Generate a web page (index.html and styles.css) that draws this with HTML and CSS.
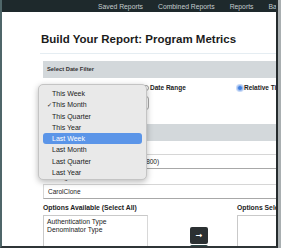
FILE: index.html
```html
<!DOCTYPE html>
<html>
<head>
<meta charset="utf-8">
<link rel="stylesheet" href="styles.css">
</head>
<body>
<div class="screen">
  <nav class="topnav">
    <span>Saved Reports</span>
    <span>Combined Reports</span>
    <span>Reports</span>
    <span>Back</span>
  </nav>
  <main class="content">
    <h1 class="title">Build Your Report: Program Metrics</h1>
    <div class="rule"></div>
    <div class="bar">Select Date Filter</div>
    <div class="radios">
      <label class="radio"><span class="dot"></span>Date Preset</label>
      <label class="radio"><span class="dot"></span>Date Range</label>
      <label class="radio"><span class="dot on"></span>Relative Time</label>
    </div>
    <div class="select">This Month<span class="chev"></span></div>
    <div class="bar bar2">Select Program</div>
    <div class="label">Program</div>
    <div class="input">CarolClone - Test Program A (ID 1800)</div>
    <div class="label">Call Program Name</div>
    <div class="input">CarolClone</div>
    <div class="options">
      <div class="olabel">Options Available (Select All)</div>
      <div></div>
      <div class="olabel">Options Selected</div>
      <div class="list">
        <div>Authentication Type</div>
        <div>Denominator Type</div>
      </div>
      <div class="mid">
        <button class="btn">&#8594;</button>
        <button class="btn btn2"></button>
      </div>
      <div class="list"></div>
    </div>
  </main>
  <div class="menu">
    <div class="item">This Week</div>
    <div class="item checked">This Month</div>
    <div class="item">This Quarter</div>
    <div class="item">This Year</div>
    <div class="item active">Last Week</div>
    <div class="item">Last Month</div>
    <div class="item">Last Quarter</div>
    <div class="item">Last Year</div>
  </div>
</div>
</body>
</html>
```

FILE: styles.css
```css
html, body {
  margin: 0;
  padding: 0;
}
body {
  background: #a9afb1;
  font-family: "Liberation Sans", Arial, sans-serif;
  color: #222;
}
.screen {
  position: relative;
  width: 278px;
  height: 248px;
  box-sizing: border-box;
  border-left: 2px solid #4f6669;
  border-right: 2px solid #252b2d;
  border-bottom: 2px solid #2f3537;
  background: #fff;
  overflow: hidden;
}
.topnav {
  height: 12px;
  background: #1e292c;
  display: flex;
  align-items: center;
  gap: 15px;
  padding-left: 96px;
  font-size: 6.8px;
  color: #c3cbcd;
  white-space: nowrap;
  overflow: hidden;
}
.content {
  padding-left: 41px;
}
.title {
  margin: 21px 0 0 -2px;
  font-size: 11.5px;
  line-height: 13px;
  font-weight: 700;
  color: #1c1c1c;
  white-space: nowrap;
}
.rule {
  margin: 7px 0 0 -3px;
  height: 1px;
  background: #e5edf2;
}
.bar {
  margin-top: 7px;
  height: 17px;
  line-height: 17px;
  background: #d3d8db;
  padding-left: 4px;
  font-size: 5.8px;
  font-weight: 700;
  color: #333;
  white-space: nowrap;
}
.radios {
  margin-top: 6px;
  height: 8px;
  display: grid;
  grid-template-columns: 100px 94px 1fr;
  font-size: 6.5px;
  font-weight: 700;
  line-height: 8px;
  white-space: nowrap;
}
.radio {
  display: flex;
  align-items: center;
  gap: 1px;
}
.dot {
  width: 4px;
  height: 4px;
  border-radius: 50%;
  border: 0.5px solid #999;
  background: #fff;
}
.dot.on {
  background: #3f7fe0;
  border-color: #9dbcf0;
  box-shadow: 0 0 0 1px #c7d9f6;
}
.select {
  margin-top: 4px;
  width: 106px;
  height: 14px;
  border: 0.5px solid #aaa;
  border-radius: 3px;
  font-size: 6.5px;
  line-height: 14px;
  padding-left: 4px;
  box-sizing: border-box;
  position: relative;
}
.chev {
  position: absolute;
  right: 1px;
  top: 4px;
  width: 2px;
  height: 5px;
  border-right: 1px solid #666;
}
.bar2 {
  margin-top: 14px;
}
.label {
  height: 13px;
  line-height: 13px;
  font-size: 6px;
  color: #333;
  white-space: nowrap;
}
.input {
  height: 15px;
  box-sizing: border-box;
  border: 1px solid #d6d6d6;
  border-bottom-color: #a8a8a8;
  border-right: none;
  padding-left: 4px;
  font-size: 6.5px;
  line-height: 13px;
  white-space: nowrap;
}
.input + .label {
  margin-top: 3px;
  height: 12px;
  line-height: 12px;
}
.options {
  margin-top: 5px;
  display: grid;
  grid-template-columns: 105px 89px 1fr;
  row-gap: 3px;
}
.olabel {
  font-size: 6.8px;
  font-weight: 700;
  line-height: 8px;
  white-space: nowrap;
}
.list {
  height: 50px;
  border: 1px solid #c9c9c9;
  border-right-color: #d8d8d8;
  box-sizing: border-box;
  padding: 2px 3px;
  font-size: 6.8px;
  line-height: 8px;
  white-space: nowrap;
}
.mid {
  padding-top: 12px;
  padding-left: 42px;
  display: flex;
  flex-direction: column;
  gap: 1px;
}
.btn {
  width: 18px;
  height: 17px;
  padding: 0;
  border: none;
  border-radius: 2px;
  background: #2b3032;
  color: #fff;
  font-size: 8px;
  font-weight: 700;
  line-height: 17px;
  font-family: "DejaVu Sans", sans-serif;
}
.btn2 {
  background: #2e4a4a;
}
.menu {
  position: absolute;
  left: 36px;
  top: 84px;
  width: 109px;
  height: 96px;
  box-sizing: border-box;
  padding: 3px 4px;
  background: #e9e9e9;
  border: 0.5px solid #c4c4c4;
  border-radius: 5px;
  box-shadow: 0 2px 6px rgba(0, 0, 0, 0.28);
}
.item {
  position: relative;
  height: 11.3px;
  line-height: 11.3px;
  padding-left: 9px;
  font-size: 7px;
  color: #222;
  border-radius: 3px;
  white-space: nowrap;
}
.item.checked::before {
  content: "\2713";
  position: absolute;
  left: 4px;
  top: 0;
  font-size: 6px;
  font-family: "DejaVu Sans", sans-serif;
}
.item.active {
  background: #5b95e8;
  color: #fff;
}
```
